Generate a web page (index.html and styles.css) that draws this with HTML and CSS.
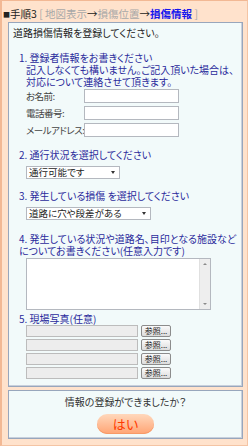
FILE: index.html
```html
<!DOCTYPE html>
<html lang="ja">
<head>
<meta charset="utf-8">
<link rel="stylesheet" href="styles.css">
</head>
<body>
<div class="frame">
  <div class="header"><span class="sq">■</span>手順3 <span class="gray">[ 地図表示</span>→<span class="gray">損傷位置</span>→<span class="cur">損傷情報</span> <span class="gray">]</span></div>
  <div class="panel main">
    <p class="intro">道路損傷情報を登録してください。</p>
    <p class="h h1">1. 登録者情報をお書きください</p>
    <p class="sub">記入しなくても構いません。ご記入頂いた場合は、</p>
    <p class="sub">対応について連絡させて頂きます。</p>
    <div class="form">
      <label class="lbl">お名前:</label><input class="txt" type="text">
      <label class="lbl">電話番号:</label><input class="txt" type="text">
      <label class="lbl">メールアドレス:</label><input class="txt" type="text">
    </div>
    <p class="h h2">2. 通行状況を選択してください</p>
    <div class="sel s1"><span>通行可能です</span><i class="arr"></i></div>
    <p class="h h3">3. 発生している損傷 を選択してください</p>
    <div class="sel s2"><span>道路に穴や段差がある</span><i class="arr"></i></div>
    <p class="h h4">4. 発生している状況や道路名、目印となる施設など</p>
    <p class="h">についてお書きください(任意入力です)</p>
    <div class="tawrap">
      <textarea class="ta"></textarea>
      <div class="sb"><i class="up"></i><i class="dn"></i></div>
    </div>
    <p class="h h5">5. 現場写真(任意)</p>
    <div class="files">
      <div class="file"><span class="fbox"></span><span class="fbtn">参照...</span></div>
      <div class="file"><span class="fbox"></span><span class="fbtn">参照...</span></div>
      <div class="file"><span class="fbox"></span><span class="fbtn">参照...</span></div>
      <div class="file"><span class="fbox"></span><span class="fbtn">参照...</span></div>
    </div>
  </div>
  <div class="panel foot">
    <p class="q">情報の登録ができましたか？</p>
    <div class="yes">はい</div>
  </div>
</div>
</body>
</html>
```
FILE: styles.css
```css
* { box-sizing: border-box; }
html, body { margin: 0; padding: 0; background: #ffffff; }
body {
  font-family: "Noto Sans CJK JP", "Liberation Sans", sans-serif;
  font-size: 10px;
  line-height: 12px;
  font-feature-settings: "palt";
  color: #222;
}
p { margin: 0; white-space: nowrap; height: 12px; }
.frame {
  width: 248px;
  height: 446px;
  background: #ffe2cc;
  border-top: 1px solid #f2b894;
  border-left: 2px solid #f2b894;
  border-right: 1px solid #f4c4a4;
  border-bottom: 1px solid #f4c4a4;
  padding: 0 0 0 6px;
  overflow: hidden;
}
.header {
  height: 21px;
  padding: 6px 0 0 0;
  margin-left: -5px;
  font-size: 10.5px;
  line-height: 13px;
  color: #222;
  white-space: nowrap;
}
.sq { font-size: 7px; vertical-align: 1px; }
.gray { color: #a8a8a8; }
.cur { color: #1515ee; font-weight: bold; }
.panel {
  width: 235px;
  background: #f2fafa;
  border: 1px solid #98a6bc;
  box-shadow: inset -1px -1px 0 #c8d0dc;
  overflow: hidden;
}
.main { height: 365px; padding: 4px 0 0 4px; }
.intro { color: #222; }
.h { color: #2a2a9c; margin-left: 6px; }
.h1 { margin-top: 13px; }
.sub { color: #2a2a9c; margin-left: 13px; }
.form {
  display: grid;
  grid-template-columns: 58px 95px;
  row-gap: 3px;
  margin: 1px 0 0 13px;
  align-items: center;
}
.lbl { color: #444; font-size: 9.5px; white-space: nowrap; letter-spacing: -0.5px; line-height: 12px; }
.txt {
  height: 14px;
  width: 95px;
  border: 1px solid #b4b8bf;
  background: #fff;
  margin: 0;
  padding: 0;
}
.h2 { margin-top: 12px; }
.sel {
  position: relative;
  margin: 5px 0 0 13px;
  height: 13px;
  border: 1px solid #b4b8bf;
  background: #fff;
  font-size: 9.5px;
  line-height: 11px;
  padding-left: 2px;
  color: #222;
  white-space: nowrap;
}
.s1 { width: 94px; }
.s2 { width: 125px; }
.arr {
  position: absolute;
  right: 4px;
  top: 4px;
  width: 0; height: 0;
  border-left: 2.5px solid transparent;
  border-right: 2.5px solid transparent;
  border-top: 3px solid #333;
}
.h3 { margin-top: 11px; }
.h4 { margin-top: 13px; }
.tawrap {
  display: flex;
  margin: 1px 0 0 13px;
  width: 185px;
  height: 52px;
  border: 1px solid #b4b8bf;
  background: #fff;
}
.ta {
  flex: 1;
  border: none;
  resize: none;
  margin: 0;
  padding: 0;
  outline: none;
  background: #fff;
}
.sb {
  width: 11px;
  background: #eeeeee;
  border-left: 1px solid #e0e0e0;
  position: relative;
}
.up, .dn {
  position: absolute;
  left: 3px;
  width: 0; height: 0;
  border-left: 2px solid transparent;
  border-right: 2px solid transparent;
}
.up { top: 4px; border-bottom: 2px solid #8a8a8a; }
.dn { bottom: 4px; border-top: 2px solid #8a8a8a; }
.h5 { margin-top: 3px; }
.files {
  display: flex;
  flex-direction: column;
  gap: 2px;
  margin: 0 0 0 13px;
}
.file { display: flex; align-items: center; gap: 3px; height: 12px; }
.fbox {
  width: 112px;
  height: 12px;
  background: #ededed;
  border: 1px solid #bcbcbc;
}
.fbtn {
  width: 30px;
  height: 12px;
  border: 1px solid #8c8c8c;
  border-radius: 2px;
  background: linear-gradient(#fafafa, #dcdcdc);
  font-size: 8px;
  line-height: 10px;
  text-align: center;
  color: #222;
}
.foot {
  height: 49px;
  margin-top: 3px;
  padding-top: 5px;
  display: flex;
  flex-direction: column;
  align-items: center;
}
.q { color: #333; font-size: 10px; line-height: 12px; }
.yes {
  margin-top: 6px;
  width: 57px;
  height: 20px;
  border-radius: 10px;
  background: linear-gradient(#ffd8bc, #ffa474);
  box-shadow: inset 0 -1px 0 #f79a68;
  color: #ff3a00;
  font-size: 13px;
  line-height: 20px;
  text-align: center;
}
```
